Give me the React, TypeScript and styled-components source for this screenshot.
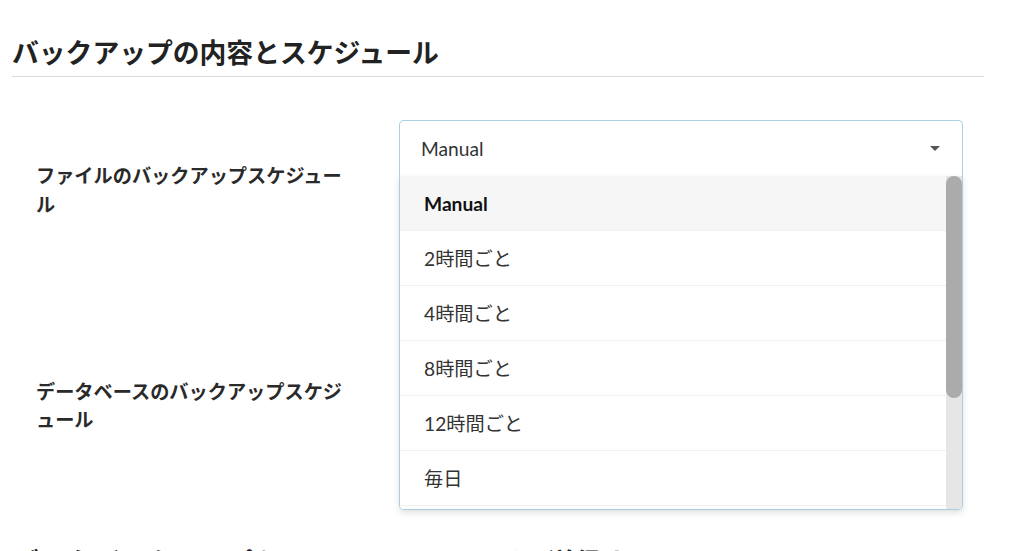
import React from 'react';
import styled, { createGlobalStyle } from 'styled-components';

const GlobalStyle = createGlobalStyle`
	html, body {
		margin: 0;
		padding: 0;
		background: #ffffff;
	}
	body {
		font-family: Lato, "Noto Sans CJK JP", sans-serif;
		color: #333333;
	}
`;

const Page = styled.div`
	width: 1024px;
	height: 551px;
	overflow: hidden;
	box-sizing: border-box;
	padding: 36px 40px 0 12px;
`;

const SectionTitle = styled.h2`
	margin: 0;
	font-size: 26.8px;
	line-height: 34px;
	font-weight: 700;
	color: #222222;
	padding-bottom: 6px;
	border-bottom: 1px solid #dcdcdc;
`;

const NextTitle = styled(SectionTitle)`
	border-bottom: none;
	margin-top: 111px;
	white-space: nowrap;
`;

const Form = styled.div`
	display: flex;
	flex-direction: column;
	gap: 116px;
	margin-top: 43px;
`;

const Row = styled.div`
	display: grid;
	grid-template-columns: 387px 564px;
	align-items: start;
`;

const Label = styled.div`
	padding: 42px 0 0 24px;
	width: 310px;
	font-size: 19.2px;
	line-height: 28.8px;
	font-weight: 700;
	color: #2a2a2a;
`;

const SelectWrap = styled.div<{ $open?: boolean }>`
	position: relative;
	z-index: ${p => (p.$open ? 5 : 1)};
`;

const Field = styled.div<{ $open?: boolean }>`
	height: 56px;
	box-sizing: border-box;
	display: flex;
	align-items: center;
	justify-content: space-between;
	padding: 0 22px 0 21px;
	border: 1px solid ${p => (p.$open ? '#a9d0e0' : '#cccccc')};
	border-bottom: ${p => (p.$open ? 'none' : '1px solid #cccccc')};
	border-radius: ${p => (p.$open ? '5px 5px 0 0' : '5px')};
	font-size: 19.2px;
	color: #333333;
	background: #ffffff;
`;

const Caret = styled.span`
	width: 0;
	height: 0;
	border-left: 5px solid transparent;
	border-right: 5px solid transparent;
	border-top: 5px solid #555555;
`;

const Menu = styled.div`
	position: absolute;
	left: 0;
	right: 0;
	top: 56px;
	height: 334px;
	box-sizing: border-box;
	display: flex;
	background: #ffffff;
	border: 1px solid #a9d0e0;
	border-top: none;
	border-radius: 0 0 5px 5px;
	box-shadow: 0 3px 6px rgba(0, 0, 0, 0.12);
	overflow: hidden;
`;

const OptionList = styled.ul`
	flex: 1;
	margin: 0;
	padding: 0;
	list-style: none;
	overflow: hidden;
`;

const ScrollTrack = styled.div`
	width: 16px;
	flex-shrink: 0;
	background: #e6e6e6;
	display: flex;
	flex-direction: column;
`;

const ScrollThumb = styled.div`
	height: 222px;
	border-radius: 8px;
	background: #ababab;
`;

const Option = styled.li<{ $selected?: boolean }>`
	height: 55px;
	box-sizing: border-box;
	display: flex;
	align-items: center;
	padding-left: 24px;
	font-size: 19.2px;
	font-weight: ${p => (p.$selected ? 700 : 400)};
	color: ${p => (p.$selected ? '#111111' : '#333333')};
	background: ${p => (p.$selected ? '#f6f6f6' : '#ffffff')};
	border-bottom: 1px solid #f1f1f1;
`;

const options = ['Manual', '2時間ごと', '4時間ごと', '8時間ごと', '12時間ごと', '毎日', '2日ごと', '毎週', '毎月'];

const Select = ({ value, open }: { value: string; open?: boolean }) => (
	<SelectWrap $open={open}>
		<Field $open={open}>
			{value}
			<Caret />
		</Field>
		{open && (
			<Menu>
				<OptionList>
					{options.map(o => (
						<Option key={o} $selected={o === value}>
							{o}
						</Option>
					))}
				</OptionList>
				<ScrollTrack>
					<ScrollThumb />
				</ScrollTrack>
			</Menu>
		)}
	</SelectWrap>
);

export default function App() {
	return (
		<>
			<GlobalStyle />
			<Page>
				<SectionTitle>バックアップの内容とスケジュール</SectionTitle>
				<Form>
					<Row>
						<Label>ファイルのバックアップスケジュール</Label>
						<Select value="Manual" open />
					</Row>
					<Row>
						<Label>データベースのバックアップスケジュール</Label>
						<Select value="Manual" />
					</Row>
				</Form>
				<NextTitle>データバックアップをリモートストレージに送信する</NextTitle>
			</Page>
		</>
	);
}
